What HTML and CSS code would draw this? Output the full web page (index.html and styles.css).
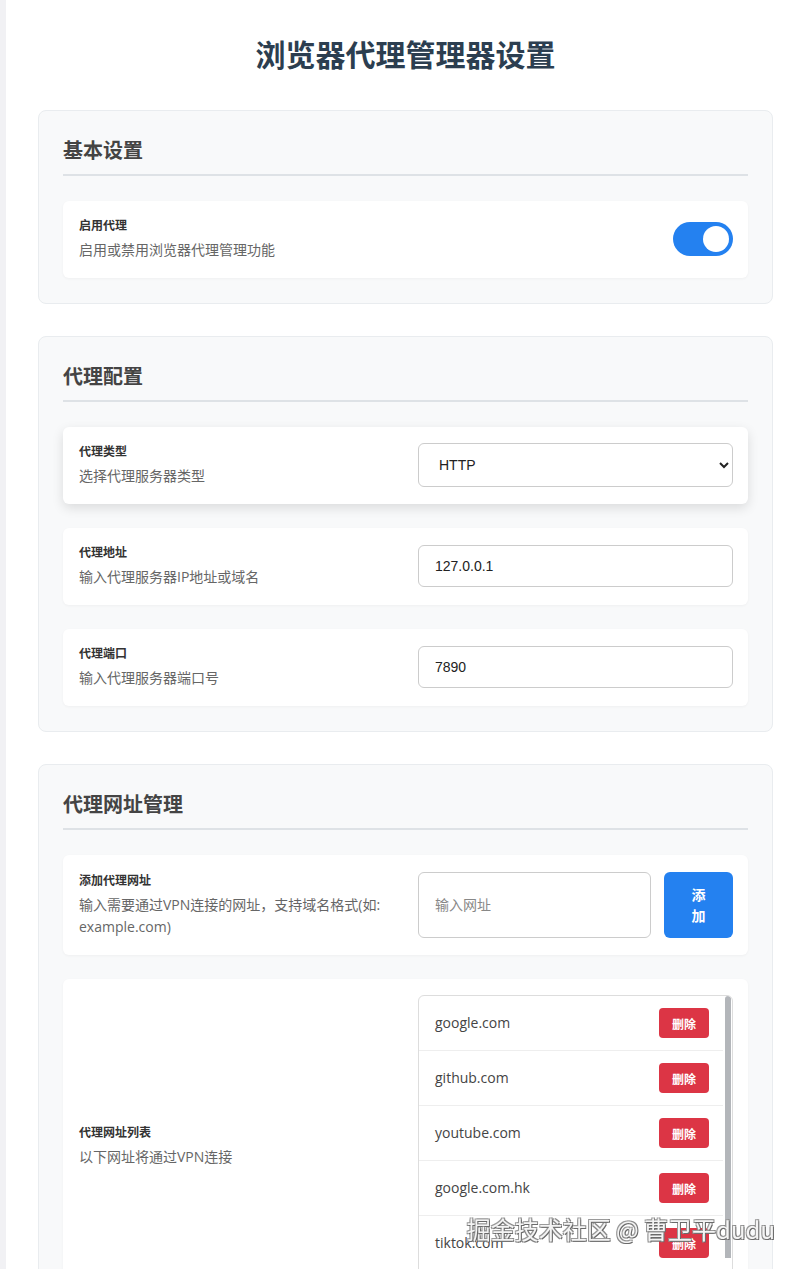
FILE: index.html
```html
<!DOCTYPE html>
<html lang="zh-CN">
<head>
    <meta charset="UTF-8">
    <meta name="viewport" content="width=device-width, initial-scale=1.0">
    <title>浏览器代理管理器设置</title>
    <link rel="stylesheet" href="styles.css">
</head>
<body>
    <div class="page">
        <h1 class="page-title">浏览器代理管理器设置</h1>

        <div class="section">
            <h2 class="section-title">基本设置</h2>
            <div class="option">
                <div class="option-info">
                    <div class="option-label">启用代理</div>
                    <div class="option-desc">启用或禁用浏览器代理管理功能</div>
                </div>
                <label class="switch">
                    <input type="checkbox" checked>
                    <span class="slider"></span>
                </label>
            </div>
        </div>

        <div class="section">
            <h2 class="section-title">代理配置</h2>
            <div class="option option-hover">
                <div class="option-info">
                    <div class="option-label">代理类型</div>
                    <div class="option-desc">选择代理服务器类型</div>
                </div>
                <div class="option-control">
                    <select class="field field-select">
                        <option>HTTP</option>
                        <option>HTTPS</option>
                        <option>SOCKS5</option>
                    </select>
                </div>
            </div>
            <div class="option">
                <div class="option-info">
                    <div class="option-label">代理地址</div>
                    <div class="option-desc">输入代理服务器IP地址或域名</div>
                </div>
                <div class="option-control">
                    <input type="text" class="field" value="127.0.0.1">
                </div>
            </div>
            <div class="option">
                <div class="option-info">
                    <div class="option-label">代理端口</div>
                    <div class="option-desc">输入代理服务器端口号</div>
                </div>
                <div class="option-control">
                    <input type="text" class="field" value="7890">
                </div>
            </div>
        </div>

        <div class="section">
            <h2 class="section-title">代理网址管理</h2>
            <div class="option option-add">
                <div class="option-info">
                    <div class="option-label">添加代理网址</div>
                    <div class="option-desc">输入需要通过VPN连接的网址，支持域名格式(如: example.com)</div>
                </div>
                <div class="option-control add-row">
                    <input type="text" class="field field-add" placeholder="输入网址">
                    <button class="btn-add">添加</button>
                </div>
            </div>
            <div class="option">
                <div class="option-info">
                    <div class="option-label">代理网址列表</div>
                    <div class="option-desc">以下网址将通过VPN连接</div>
                </div>
                <div class="option-control">
                    <ul class="url-list">
                        <li class="url-item"><span>google.com</span><button class="btn-delete">删除</button></li>
                        <li class="url-item"><span>github.com</span><button class="btn-delete">删除</button></li>
                        <li class="url-item"><span>youtube.com</span><button class="btn-delete">删除</button></li>
                        <li class="url-item"><span>google.com.hk</span><button class="btn-delete">删除</button></li>
                        <li class="url-item"><span>tiktok.com</span><button class="btn-delete">删除</button></li>
                        <li class="url-item"><span>twitter.com</span><button class="btn-delete">删除</button></li>
                        <li class="url-item"><span>openai.com</span><button class="btn-delete">删除</button></li>
                    </ul>
                </div>
            </div>
        </div>
    </div>
    <div class="watermark">掘金技术社区 @ 曹卫平dudu</div>
</body>
</html>
```

FILE: styles.css
```css
body {
    font-family: "Open Sans", "Noto Sans CJK SC", sans-serif;
    background-color: #fff;
    color: #333;
    margin: 0;
    padding: 0;
    border-left: 6px solid #f1f1f4;
}
.page {
    width: 735px;
    margin: 0 30px 0 32px;
    padding-bottom: 40px;
}
.page-title {
    font-family: "Noto Sans CJK SC", sans-serif;
    font-size: 30px;
    line-height: 42px;
    font-weight: bold;
    color: #2c3e50;
    text-align: center;
    margin: 32px 0 36px;
}
.section {
    background-color: #f8f9fa;
    border: 1px solid #e9ecef;
    border-radius: 8px;
    padding: 24px 24px 25px;
    margin-bottom: 32px;
}
.section-title {
    font-family: "Noto Sans CJK SC", sans-serif;
    font-size: 20px;
    line-height: 30px;
    font-weight: bold;
    color: #444;
    margin: 0 0 25px;
    padding-bottom: 9px;
    border-bottom: 2px solid #dee2e6;
}
/* Строка настройки */
.option {
    display: flex;
    align-items: center;
    gap: 17px;
    background-color: #fff;
    border-radius: 6px;
    padding: 16px 15px 17px 16px;
    margin-bottom: 24px;
    box-shadow: 0 1px 3px rgba(0, 0, 0, 0.04);
}
.option:last-child {
    margin-bottom: 0;
}
.option-hover {
    box-shadow: 0 4px 12px rgba(0, 0, 0, 0.12);
}
.option-add {
    padding-top: 17px;
    padding-bottom: 17px;
}
.option-info {
    flex: 1;
}
.option-label {
    font-size: 12px;
    line-height: 18px;
    font-weight: bold;
    color: #333;
}
.option-desc {
    font-size: 14px;
    line-height: 22px;
    color: #666;
    margin-top: 4px;
}
.option-control {
    width: 315px;
    flex-shrink: 0;
}
.field {
    display: block;
    width: 100%;
    box-sizing: border-box;
    height: 42px;
    padding: 0 16px;
    border: 1px solid #ccc;
    border-radius: 6px;
    font-family: "Liberation Sans", Arial, sans-serif;
    font-size: 14px;
    color: #222;
    background-color: #fff;
}
.field-select {
    height: 44px;
    padding: 0 16px;
}
.field::placeholder {
    font-family: "Noto Sans CJK SC", sans-serif;
    color: #888;
}
/* Добавление адреса */
.add-row {
    display: flex;
    align-self: stretch;
    gap: 13px;
}
.field-add {
    flex: 1;
    height: auto;
    min-width: 0;
}
.btn-add {
    width: 69px;
    padding: 0 22px;
    background-color: #2481f0;
    color: #fff;
    border: none;
    border-radius: 6px;
    font-family: "Noto Sans CJK SC", sans-serif;
    font-size: 14px;
    line-height: 21px;
    font-weight: bold;
    cursor: pointer;
}
/* Список адресов */
.url-list {
    position: relative;
    list-style: none;
    margin: 0;
    padding: 0 9px 0 0;
    max-height: 300px;
    overflow: hidden;
    border: 1px solid #ddd;
    border-radius: 6px;
}
/* Полоса прокрутки списка */
.url-list::after {
    content: '';
    position: absolute;
    top: 0;
    right: 1px;
    width: 6px;
    height: 262px;
    background-color: #b3b6ba;
    border-radius: 3px 3px 0 0;
}
.url-item {
    display: flex;
    align-items: center;
    justify-content: space-between;
    padding: 12px 14px 12px 16px;
    border-bottom: 1px solid #eee;
    font-size: 14px;
    line-height: 30px;
    color: #444;
}
.btn-delete {
    height: 30px;
    padding: 0 13px;
    background-color: #dc3545;
    color: #fff;
    border: none;
    border-radius: 4px;
    font-family: "Noto Sans CJK SC", sans-serif;
    font-size: 12px;
    font-weight: bold;
    cursor: pointer;
}
/* Переключатель */
.switch {
    position: relative;
    display: inline-block;
    width: 60px;
    height: 34px;
}
.switch input {
    display: none;
}
.slider {
    position: absolute;
    inset: 0;
    background-color: #ccc;
    border-radius: 34px;
    cursor: pointer;
}
.slider::after {
    content: '';
    position: absolute;
    top: 4px;
    left: 4px;
    width: 26px;
    height: 26px;
    border-radius: 50%;
    background-color: #fff;
}
.switch input:checked + .slider {
    background-color: #2481f0;
}
.switch input:checked + .slider::after {
    left: 30px;
}
.watermark {
    position: fixed;
    right: 28px;
    top: 1212px;
    font-family: "Noto Sans CJK SC", sans-serif;
    font-size: 24px;
    line-height: 34px;
    color: #f4f4f4;
    text-shadow: 1px 1px 0 #6a6a6a, -1px -1px 0 #9a9a9a, 1px -1px 0 #8a8a8a, -1px 1px 0 #8a8a8a;
}
```
